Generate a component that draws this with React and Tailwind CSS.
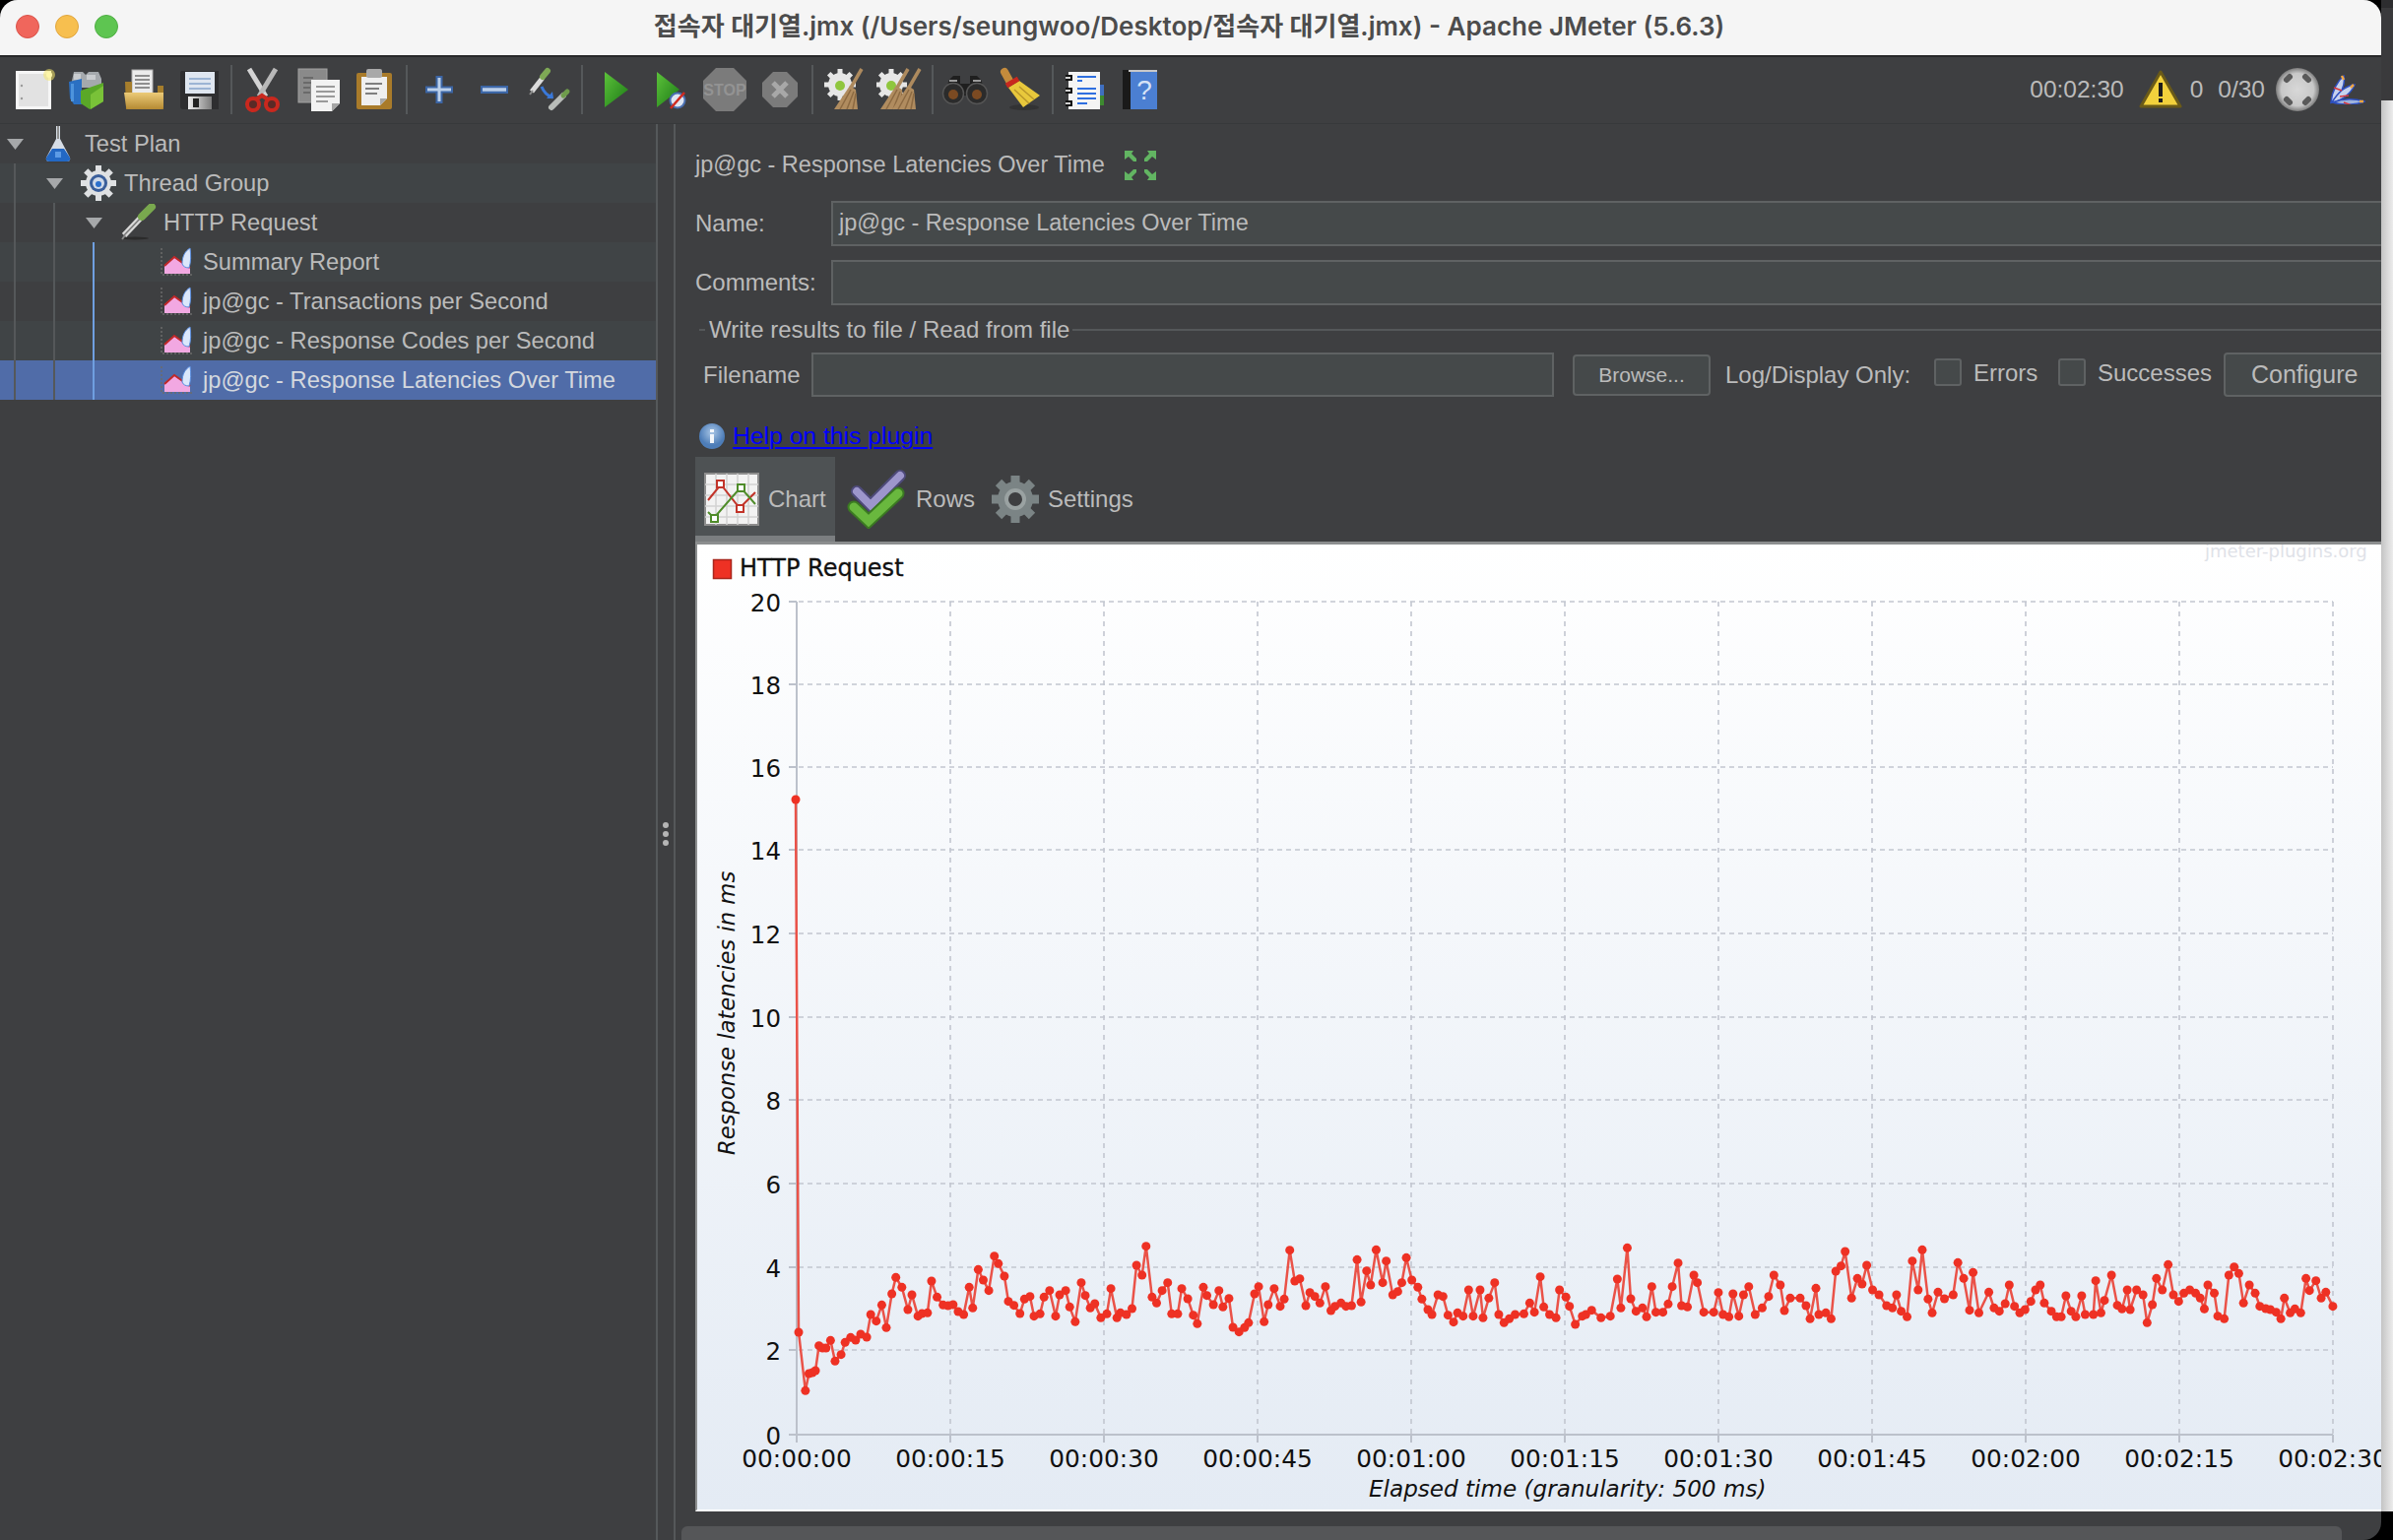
import React from 'react';

const Svg = ({ w = 48, h = 48, children, className = '' }) => (
  <svg width={w} height={h} viewBox={`0 0 ${w} ${h}`} className={`block shrink-0 ${className}`}>{children}</svg>
);

const Gear = ({ cx, cy, r, fill, teeth = 8, tw = 5, tl = 4 }) => (
  <g>
    {Array.from({ length: teeth }).map((_, i) => (
      <rect key={i} x={cx - tw / 2} y={cy - r - tl} width={tw} height={tl + 3} fill={fill} transform={`rotate(${(i * 360) / teeth} ${cx} ${cy})`} />
    ))}
    <circle cx={cx} cy={cy} r={r} fill={fill} />
  </g>
);

const NewIcon = () => (
  <Svg>
    <rect x="7.5" y="6.5" width="33" height="36" fill="#e2e2e2" stroke="#f6f6f6" strokeWidth="3" />
    <circle cx="12" cy="20" r="1.2" fill="#9a9a9a" /><circle cx="12" cy="33" r="1.2" fill="#9a9a9a" />
    <circle cx="40" cy="9" r="6" fill="#f5e76a" opacity=".55" /><circle cx="40" cy="9" r="3" fill="#fdf6a8" />
  </Svg>
);
const TemplatesIcon = () => (
  <Svg>
    <path d="M7 15 L9 6 h9 l3 3 l3-3 h10 l3 7 v9 H7z" fill="#a5a9ad" />
    <path d="M9 8 h7 v6 h-7z M22 9 h9 v5 h-9z" fill="#c9cccf" />
    <path d="M4 16 L17 13 V39 L9 39 L5 33z" fill="#2b70c2" />
    <path d="M6 18 h3 v18 h-3z" fill="#4e94dc" />
    <path d="M16 25 L39 17 V36 L25 44 L16 38z" fill="#5aa828" />
    <path d="M26 29 L39 20 V36 L26 44z" fill="#79c238" />
  </Svg>
);
const OpenIcon = () => (
  <Svg>
    <rect x="12" y="4" width="21" height="26" fill="#ececec" stroke="#b0b0b0" />
    <path d="M15 10h15M15 14h15M15 18h15M15 22h15" stroke="#8f8f8f" strokeWidth="2" />
    <path d="M5 16 H12 V30 H38 V20 H44 V44 H6z" fill="#a67e2c" />
    <defs><linearGradient id="fold" x1="0" y1="0" x2="0" y2="1"><stop offset="0" stopColor="#eccb78" /><stop offset="1" stopColor="#b58a33" /></linearGradient></defs>
    <path d="M4 27 H44 L44 41 Q44 44 41 44 H9 Q6 44 6 41z" fill="url(#fold)" />
  </Svg>
);
const SaveIcon = () => (
  <Svg>
    <path d="M5 7 Q5 5 7 5 H44 V44 H8 Q5 44 5 41z" fill="#2e2e30" />
    <rect x="10" y="6" width="30" height="22" fill="#dfe6f0" />
    <path d="M14 13h22M14 18h22M14 23h22" stroke="#9cb4d4" strokeWidth="2" />
    <defs><linearGradient id="shut" x1="0" y1="0" x2="1" y2="0"><stop offset="0" stopColor="#efefef" /><stop offset="1" stopColor="#7b7b7b" /></linearGradient></defs>
    <rect x="13" y="31" width="24" height="13" fill="url(#shut)" />
    <rect x="18" y="33" width="6" height="9" fill="#222" />
  </Svg>
);
const CutIcon = () => (
  <Svg>
    <path d="M9 3 L26 31" stroke="#d4d4d4" strokeWidth="5" />
    <path d="M36 3 L19 31" stroke="#b8b8b8" strokeWidth="5" />
    <ellipse cx="13" cy="39" rx="6" ry="6" fill="#5a2a26" stroke="#c9281e" strokeWidth="4" />
    <ellipse cx="32" cy="39" rx="6" ry="6" fill="#5a2a26" stroke="#c9281e" strokeWidth="4" />
    <path d="M16 34 L22 30 L28 34" stroke="#c9281e" strokeWidth="4" fill="none" />
  </Svg>
);
const CopyIcon = () => (
  <Svg>
    <rect x="3" y="3" width="29" height="34" fill="#8a8a8a" stroke="#a2a2a2" />
    <path d="M8 12h10M8 17h8M8 22h7M8 27h7" stroke="#6a6a6a" strokeWidth="2" />
    <path d="M16 14 H45 V38 L37 46 H16z" fill="#f2f2f2" />
    <path d="M37 46 V38 H45z" fill="#a5a5a5" />
    <path d="M21 21h19M21 26h19M21 31h19M21 36h12" stroke="#9a9a9a" strokeWidth="2" />
  </Svg>
);
const PasteIcon = () => (
  <Svg>
    <rect x="6" y="7" width="36" height="37" rx="2" fill="#a97b2a" />
    <path d="M11 11 H37 V33 L30 40 H11z" fill="#efefef" />
    <path d="M30 40 V33 H37z" fill="#a8a8a8" />
    <rect x="16" y="3" width="16" height="9" rx="2" fill="#a9a9a9" />
    <path d="M15 18h17M15 23h14M15 28h12" stroke="#7f7f7f" strokeWidth="2" />
  </Svg>
);
const PlusIcon = () => (
  <Svg>
    <path d="M24 10V38M10 24H38" stroke="#3c66a6" strokeWidth="7" />
    <path d="M24 12V36M12 24H36" stroke="#bcd0ea" strokeWidth="3" />
  </Svg>
);
const MinusIcon = () => (
  <Svg>
    <path d="M10 24H38" stroke="#3c66a6" strokeWidth="8" />
    <path d="M12 24H36" stroke="#bcd0ea" strokeWidth="3.5" />
  </Svg>
);
const ToggleIcon = () => (
  <Svg>
    <path d="M6 26 L17 12" stroke="#dcdcdc" strokeWidth="5" />
    <path d="M4 29 L7 25" stroke="#888" strokeWidth="2" />
    <path d="M17 11 L22 5" stroke="#7ea855" strokeWidth="6" strokeLinecap="round" />
    <path d="M16 21 Q19 29 27 32" stroke="#3a78d8" strokeWidth="3" fill="none" />
    <path d="M28 33 L21 33 L27 26z" fill="#3a78d8" />
    <path d="M26 42 L38 30" stroke="#b8bcb8" strokeWidth="6" strokeLinecap="round" />
    <path d="M38 30 L42 26" stroke="#6f9c4c" strokeWidth="5" strokeLinecap="round" />
  </Svg>
);
const PlayIcon = () => (
  <Svg>
    <defs><linearGradient id="pl" x1="0" y1="0" x2="1" y2="1"><stop offset="0" stopColor="#5cc23a" /><stop offset="1" stopColor="#1c7a16" /></linearGradient></defs>
    <path d="M14 6 L38 24 L14 42z" fill="url(#pl)" />
  </Svg>
);
const PlayNoIcon = () => (
  <Svg>
    <defs><linearGradient id="pl2" x1="0" y1="0" x2="1" y2="1"><stop offset="0" stopColor="#5cc23a" /><stop offset="1" stopColor="#1c7a16" /></linearGradient></defs>
    <path d="M11 6 L34 24 L11 42z" fill="url(#pl2)" />
    <circle cx="32" cy="35" r="7.5" fill="#dfe6f2" stroke="#4a6fb0" strokeWidth="2" />
    <path d="M25 43 L39 27" stroke="#d02a20" strokeWidth="2.5" />
  </Svg>
);
const StopIcon = () => (
  <Svg>
    <path d="M15 2 H33 L46 15 V33 L33 46 H15 L2 33 V15z" fill="#7b7b7b" />
    <text x="24" y="30" textAnchor="middle" fontSize="16" fontWeight="700" fill="#939393" fontFamily="'Liberation Sans',sans-serif">STOP</text>
  </Svg>
);
const ShutdownIcon = () => (
  <Svg>
    <path d="M17 6 H31 L42 17 V31 L31 42 H17 L6 31 V17z" fill="#7b7b7b" />
    <path d="M17 17 L31 31 M31 17 L17 31" stroke="#a8a8a8" strokeWidth="5" />
  </Svg>
);
const BroomHead = ({ dx = 0 }) => (
  <g transform={`translate(${dx} 0)`}>
    <path d="M30 22 L41 3" stroke="#ad8a5e" strokeWidth="3.5" />
    <path d="M13 44 L29 20 L35 24 L37 44z" fill="#b08c5f" />
    <path d="M19 44 L30 24 M26 44 L33 26 M32 44 L35 28" stroke="#8c6a42" strokeWidth="1.5" />
  </g>
);
const ClearIcon = () => (
  <Svg>
    <Gear cx={19} cy={19} r={12} fill="#e6e6e6" tw={5} tl={4} />
    <circle cx="19" cy="20" r="5" fill="#8fc63e" />
    <BroomHead />
  </Svg>
);
const ClearAllIcon = () => (
  <Svg>
    <Gear cx={15} cy={19} r={12} fill="#e6e6e6" tw={5} tl={4} />
    <circle cx="15" cy="20" r="5" fill="#8fc63e" />
    <BroomHead dx={-9} />
    <BroomHead dx={3} />
  </Svg>
);
const SearchIcon = () => (
  <Svg>
    <path d="M8 14 L12 10 H19 V18 H29 V10 H36 L40 14 L46 30 H2z" fill="#1f1f1f" />
    <circle cx="12" cy="28" r="10.5" fill="#2b2b2b" stroke="#555" strokeWidth="1.5" />
    <circle cx="36" cy="28" r="10.5" fill="#2b2b2b" stroke="#555" strokeWidth="1.5" />
    <circle cx="12" cy="29" r="5" fill="#7b4a22" />
    <circle cx="36" cy="29" r="5" fill="#7b4a22" />
    <path d="M8 15h8M32 15h8" stroke="#9a9a9a" strokeWidth="2" />
  </Svg>
);
const BroomIcon = () => (
  <Svg>
    <ellipse cx="28" cy="42" rx="15" ry="3" fill="#2b2b2b" opacity=".6" />
    <path d="M8 6 L13 15" stroke="#c48b3c" strokeWidth="8" strokeLinecap="round" />
    <path d="M12 22 L23 15 L44 30 L27 42z" fill="#e8c83c" />
    <path d="M18 24 L33 38 M23 21 L38 34" stroke="#b8962a" strokeWidth="1.5" />
    <path d="M10 20 L22 13" stroke="#c8281e" strokeWidth="5" />
  </Svg>
);
const FuncIcon = () => (
  <Svg>
    <rect x="38" y="19" width="5" height="11" fill="#3f6fc0" />
    <rect x="38" y="30" width="5" height="10" fill="#3d8a30" />
    <rect x="7" y="6" width="32" height="38" fill="#f4f4f4" />
    <path d="M4 12h7M4 25h7M4 38h7" stroke="#111" strokeWidth="6" />
    <path d="M4 12h5M4 25h5M4 38h5" stroke="#cfcfcf" strokeWidth="2" />
    <path d="M16 11h19M16 15h5M16 23h19M16 28h19M16 33h19M16 38h10" stroke="#2f6fe0" strokeWidth="2" />
  </Svg>
);
const HelpIcon = () => (
  <Svg>
    <rect x="6" y="4" width="10" height="40" fill="#1a1a1a" />
    <rect x="14" y="6" width="27" height="38" fill="#4b7fd2" />
    <rect x="12" y="4" width="29" height="2" fill="#c8c8c8" />
    <text x="28" y="34" textAnchor="middle" fontSize="28" fill="#d5e2f6" fontFamily="'Liberation Sans',sans-serif">?</text>
  </Svg>
);
const WarnIcon = () => (
  <Svg w={44} h={40}>
    <path d="M22 2 L42 37 H2z" fill="#f2d13c" stroke="#6a5a18" strokeWidth="3" strokeLinejoin="round" />
    <path d="M22 13 V27" stroke="#1c1c1c" strokeWidth="4" />
    <rect x="20" y="29" width="4" height="4" fill="#1c1c1c" />
  </Svg>
);
const BuoyIcon = () => (
  <Svg w={44} h={44}>
    <defs><radialGradient id="bu"><stop offset="0" stopColor="#d8d8d8" /><stop offset=".75" stopColor="#c8c8c8" /><stop offset="1" stopColor="#7c7c7c" /></radialGradient></defs>
    <circle cx="22" cy="22" r="22" fill="url(#bu)" />
    <g stroke="#5a5a5a" strokeWidth="6" strokeLinecap="round">
      <path d="M11 12 L14 9 M33 12 L30 9 M11 32 L14 35 M33 32 L30 35" />
    </g>
  </Svg>
);
const FeatherIcon = () => (
  <Svg w={36} h={30}>
    <path d="M1 28 C2 16 8 6 14 1 C16 10 11 22 1 28z" fill="#c6d2ee" stroke="#2e50c0" strokeWidth="1.5" />
    <path d="M2 28 C8 18 16 11 25 10 C22 18 13 26 2 28z" fill="#c6d2ee" stroke="#2e50c0" strokeWidth="1.5" />
    <path d="M3 28 C13 24 24 24 35 27 C26 31 12 31 3 28z" fill="#9fb3dc" stroke="#2e50c0" strokeWidth="1.5" />
    <path d="M12 1 l2 4 M24 10 l-3 3 M34 27 l-4 0" stroke="#f2a641" strokeWidth="2.5" />
    <path d="M4 13 l8 3 M10 22 l9 -1 M14 28 l8 3" stroke="#d8383c" strokeWidth="1.5" />
  </Svg>
);
const ExpandIcon = () => (
  <Svg w={32} h={32}>
    <g fill="#62b562">
      <path d="M0 1 H9 L7 4 L12 9 V12 H9 L4 7 L0 10z" />
      <path d="M32 1 H23 L25 4 L20 9 V12 H23 L28 7 L32 10z" />
      <path d="M0 31 H9 L7 28 L12 23 V20 H9 L4 25 L0 22z" />
      <path d="M32 31 H23 L25 28 L20 23 V20 H23 L28 25 L32 22z" />
    </g>
  </Svg>
);
const InfoIcon = () => (
  <Svg w={26} h={28}>
    <defs><radialGradient id="inf" cx=".5" cy=".35"><stop offset="0" stopColor="#a9c6e6" /><stop offset="1" stopColor="#4d7db8" /></radialGradient></defs>
    <circle cx="13" cy="14" r="13" fill="url(#inf)" />
    <rect x="11" y="12" width="4" height="9" fill="#f2f6fb" />
    <rect x="11" y="7" width="4" height="3" fill="#f2f6fb" />
  </Svg>
);
const ChartTabIcon = () => (
  <Svg w={56} h={54}>
    <rect x="1" y="1" width="54" height="52" fill="#f2f2f2" stroke="#8e8e8e" strokeWidth="2" />
    <path d="M12 1v52M23 1v52M34 1v52M45 1v52M1 12h54M1 23h54M1 34h54M1 45h54" stroke="#d2d2d2" strokeWidth="1.5" />
    <path d="M4 28 L17 12 L36 36 L52 20" stroke="#c2342a" strokeWidth="2" fill="none" />
    <path d="M4 40 L10 46 L37 15 L52 32" stroke="#4f8c2a" strokeWidth="2" fill="none" />
    <rect x="13" y="8" width="7" height="7" fill="#fff" stroke="#c2342a" strokeWidth="2" />
    <rect x="33" y="33" width="7" height="7" fill="#fff" stroke="#c2342a" strokeWidth="2" />
    <rect x="34" y="12" width="7" height="7" fill="#fff" stroke="#4f8c2a" strokeWidth="2" />
    <rect x="7" y="43" width="7" height="7" fill="#fff" stroke="#4f8c2a" strokeWidth="2" />
  </Svg>
);
const RowsTabIcon = () => (
  <Svg w={60} h={60}>
    <path d="M10 22 L24 36 L54 6" stroke="#4e4a7a" strokeWidth="12" fill="none" strokeLinecap="round" />
    <path d="M10 22 L24 36 L54 6" stroke="#9d96cc" strokeWidth="8" fill="none" strokeLinecap="round" />
    <path d="M7 38 L22 52 L52 24" stroke="#3b7a22" strokeWidth="13" fill="none" strokeLinecap="round" />
    <path d="M7 38 L22 52 L52 24" stroke="#69b83e" strokeWidth="9" fill="none" strokeLinecap="round" />
  </Svg>
);
const SettingsTabIcon = () => (
  <Svg w={48} h={50}>
    <Gear cx={24} cy={25} r={18} fill="#7b8485" teeth={8} tw={9} tl={6} />
    <circle cx="24" cy="25" r="11" fill="#9aa2a2" />
    <circle cx="24" cy="25" r="7" fill="#3e3f41" />
  </Svg>
);
const FlaskIcon = () => (
  <Svg w={36} h={38}>
    <path d="M15 1 H19 V14 L29 33 Q30 37 26 37 H8 Q4 37 5 33 L15 14z" fill="#d6dde6" />
    <path d="M17 1 V14" stroke="#8f8f8f" strokeWidth="2" />
    <path d="M11 24 H23 L29 33 Q30 37 26 37 H8 Q4 37 5 33z" fill="#2368c4" />
    <path d="M14 27 h6 v6 h-6z" fill="#5d9be6" />
  </Svg>
);
const TreeGearIcon = () => (
  <Svg w={38} h={38}>
    <Gear cx={19} cy={19} r={13} fill="#dfe1e3" teeth={8} tw={6} tl={5} />
    <circle cx="19" cy="19" r="9" fill="#3a5e9a" />
    <circle cx="19" cy="19" r="6" fill="#cfd9e8" />
    <circle cx="19" cy="20" r="3" fill="#2b6fcc" />
  </Svg>
);
const DropperIcon = () => (
  <Svg w={38} h={38}>
    <ellipse cx="16" cy="35" rx="14" ry="1.5" fill="#2b2b2b" />
    <path d="M5 32 L23 13" stroke="#d8d8d8" strokeWidth="6" />
    <path d="M5 32 L23 13" stroke="#777" strokeWidth="1.5" />
    <path d="M23 13 L33 3" stroke="#79a84e" strokeWidth="8" strokeLinecap="round" />
    <path d="M3 36 L6 32" stroke="#888" strokeWidth="2" />
  </Svg>
);
const ListenerIcon = () => (
  <Svg w={34} h={30}>
    <path d="M1 1 V28 H32" stroke="#6b6b6b" strokeWidth="1.5" strokeDasharray="2 2" fill="none" />
    <path d="M4 27 V19 L14 10 L21 15 L30 21 V27z" fill="#f2a8e2" />
    <path d="M4 19 L14 10 L21 15 L30 21" stroke="#c02828" strokeWidth="2" fill="none" />
    <path d="M22 17 C22 9 25 4 30 1 C31 8 31 15 29 21 C26 21 23 20 22 17z" fill="#dbe7fb" stroke="#5a8ee0" strokeWidth="1" />
  </Svg>
);

const rawA = [[231,577],[238,525],[245,522],[251,516],[258,440],[265,447],[272,447],[281,424],[290,487],[302,467],[310,430],[321,415],[331,423],[341,405],[353,414],[361,345],[372,365],[383,316],[392,385],[403,282],[411,232],[423,262],[435,330],[443,285],[455,350],[463,342],[474,340],[482,243],[493,292],[505,316],[515,318],[525,315],[535,336],[546,345],[557,262],[564,325],[575,208],[585,240],[596,272],[607,167],[615,190],[627,228],[635,305],[646,317],[658,342],[667,298],[678,290],[686,350],[698,343],[706,292],[717,272],[729,350],[737,285],[749,272],[757,322],[768,367],[780,248],[788,287],[798,325],[807,312],[819,355],[831,343],[839,266],[851,355],[858,340],[870,345],[881,327],[890,195],[901,225],[909,137],[921,292],[930,310],[941,272],[952,248],[960,343],[972,343],[980,266],[992,297],[1003,347],[1011,373],[1023,262],[1030,287],[1043,315],[1054,272],[1062,322],[1074,296],[1082,384],[1094,398],[1105,385],[1113,370],[1125,282],[1133,260],[1144,367],[1152,315],[1164,266],[1176,320],[1184,298],[1195,149],[1205,243],[1215,236],[1227,318],[1235,278],[1245,290],[1255,310],[1266,260],[1277,333],[1285,320],[1297,310],[1307,320],[1318,318],[1329,178],[1337,307],[1348,212],[1356,255],[1367,148],[1380,248],[1387,182],[1400,285],[1410,275],[1418,248],[1427,172],[1438,240],[1450,262],[1458,298],[1470,330],[1478,345],[1490,285],[1500,290],[1510,347],[1521,368],[1529,340],[1540,350],[1551,270],[1560,350]];
const rawB = [[5,270],[10,355],[20,295],[30,248],[37,345],[46,370],[55,358],[65,345],[80,343],[90,310],[98,338],[108,230],[114,322],[124,345],[135,355],[141,270],[152,292],[158,320],[168,375],[180,350],[186,345],[196,332],[212,355],[228,350],[240,237],[246,325],[257,142],[263,297],[272,335],[283,325],[290,352],[299,260],[306,338],[318,338],[327,313],[334,260],[344,188],[350,318],[360,322],[371,225],[377,248],[388,338],[405,338],[413,278],[421,345],[431,352],[438,282],[448,350],[456,285],[465,260],[476,345],[488,325],[499,290],[508,225],[519,255],[526,333],[536,295],[553,295],[563,318],[570,358],[580,265],[585,345],[597,340],[606,358],[614,213],[623,197],[630,153],[641,295],[651,235],[659,252],[667,195],[677,270],[688,285],[701,318],[711,325],[718,285],[726,335],[736,352],[745,182],[755,270],[762,148],[772,298],[779,340],[789,277],[800,297],[815,285],[823,187],[833,235],[843,332],[849,217],[859,340],[876,277],[885,325],[894,335],[904,312],[911,255],[920,320],[929,340],[938,330],[948,305],[956,270],[964,255],[971,310],[983,335],[992,352],[1000,352],[1008,288],[1017,335],[1025,352],[1035,288],[1041,345],[1055,345],[1059,242],[1068,340],[1074,302],[1086,225],[1096,317],[1104,328],[1113,270],[1118,330],[1129,270],[1140,285],[1147,370],[1156,315],[1163,235],[1173,270],[1183,193],[1192,285],[1201,305],[1210,280],[1220,270],[1230,280],[1238,295],[1245,328],[1251,255],[1262,280],[1268,350],[1279,358],[1287,225],[1296,200],[1304,220],[1312,310],[1322,255],[1332,280],[1340,320],[1350,327],[1358,330],[1368,338],[1376,358],[1382,295],[1392,340],[1400,328],[1410,340],[1419,235],[1425,272],[1436,242],[1445,295],[1453,277],[1465,320]];
const pts = [
  [808, 812],
  [811, 1353],
  ...rawA.map(([x, y]) => [700 + x / 1.96, 1220 + y / 3]),
  ...rawB.map(([x, y]) => [1500 + x / 1.686, 1220 + y / 3]),
];

const yVals = [[20, 611], [18, 695], [16, 779], [14, 863], [12, 948], [10, 1033], [8, 1117], [6, 1202], [4, 1287], [2, 1371], [0, 1457]];
const xLabels = ['00:00:00', '00:00:15', '00:00:30', '00:00:45', '00:01:00', '00:01:15', '00:01:30', '00:01:45', '00:02:00', '00:02:15', '00:02:30'];
const dv = "'DejaVu Sans',sans-serif";

function Chart() {
  return (
    <svg width="1710" height="980" viewBox="708 553 1710 980" className="block">
      <text x="2239" y="566" fontSize="18" fill="#dfe2e8" fontFamily={dv}>jmeter-plugins.org</text>
      <rect x="724.5" y="568.5" width="18" height="19" fill="#ee3124" stroke="#a9261c" strokeWidth="1.5" />
      <text x="751" y="585" fontSize="24" fill="#111" fontFamily={dv} stroke="#111" strokeWidth=".3">HTTP Request</text>
      {yVals.map(([v, y]) => (
        <g key={v}>
          <text x="793" y={y + 10} textAnchor="end" fontSize="24.5" fill="#111" fontFamily={dv}>{v}</text>
          <path d={`M801 ${y}H809`} stroke="#bcc1cb" strokeWidth="2" />
          {v !== 0 && <path d={`M811 ${y}H2369`} stroke="#c2c6d0" strokeWidth="1.6" strokeDasharray="5 4" />}
        </g>
      ))}
      {xLabels.map((l, i) => {
        const x = 809 + 156 * i;
        return (
          <g key={l}>
            {i > 0 && <path d={`M${x} 611V1457`} stroke="#c2c6d0" strokeWidth="1.6" strokeDasharray="5 5" />}
            <path d={`M${x} 1457V1465`} stroke="#bcc1cb" strokeWidth="2" />
            <text x={x} y="1490" textAnchor="middle" fontSize="24.8" fill="#111" fontFamily={dv}>{l}</text>
          </g>
        );
      })}
      <path d="M809 611V1457H2369" stroke="#bcc1cb" strokeWidth="2" fill="none" />
      <text transform="translate(746 1173) rotate(-90)" fontSize="22.7" fontStyle="italic" fill="#111" fontFamily={dv}>Response latencies in ms</text>
      <text x="1390" y="1520" fontSize="23.1" fontStyle="italic" fill="#111" fontFamily={dv}>Elapsed time (granularity: 500 ms)</text>
      <polyline points={pts.map((p) => p.join(',')).join(' ')} fill="none" stroke="#ea5248" strokeWidth="2.5" />
      {pts.map((p, i) => (
        <circle key={i} cx={p[0]} cy={p[1]} r="4.5" fill="#ee3124" />
      ))}
    </svg>
  );
}

const Tri = () => (
  <svg width="20" height="14" viewBox="0 0 20 14" className="block shrink-0"><path d="M1 2 H18 L9.5 13z" fill="#a6a8aa" /></svg>
);

const rows = [
  { pl: 'pl-[6px]', icon: <FlaskIcon />, t: 'Test Plan', arrow: true },
  { pl: 'pl-[46px]', icon: <TreeGearIcon />, t: 'Thread Group', arrow: true, alt: true },
  { pl: 'pl-[86px]', icon: <DropperIcon />, t: 'HTTP Request', arrow: true },
  { pl: 'pl-[126px]', icon: <ListenerIcon />, t: 'Summary Report', alt: true },
  { pl: 'pl-[126px]', icon: <ListenerIcon />, t: 'jp@gc - Transactions per Second' },
  { pl: 'pl-[126px]', icon: <ListenerIcon />, t: 'jp@gc - Response Codes per Second', alt: true },
  { pl: 'pl-[126px]', icon: <ListenerIcon />, t: 'jp@gc - Response Latencies Over Time', sel: true },
];

function Tree() {
  return (
    <div className="relative w-[666px] shrink-0 text-[23.7px]">
      {rows.map((r) => (
        <div key={r.t} className={`flex h-10 items-center ${r.pl} ${r.sel ? 'bg-[#506ca8] text-[#d4d8de]' : r.alt ? 'bg-[#404446]' : ''}`}>
          <span className="flex w-5 shrink-0 items-center justify-center">{r.arrow ? <Tri /> : null}</span>
          <span className="ml-[15px] flex w-[38px] shrink-0 items-center justify-center">{r.icon}</span>
          <span className="ml-[7px] mt-[2px]">{r.t}</span>
        </div>
      ))}
      <span className="absolute left-[14px] top-10 h-[240px] w-[2px] bg-[#55585a]" />
      <span className="absolute left-[54px] top-20 h-[200px] w-[2px] bg-[#55585a]" />
      <span className="absolute left-[94px] top-[120px] h-[160px] w-[2px] bg-[#6f9fe0]" />
    </div>
  );
}

const Sep = () => (
  <div className="flex h-[50px] w-[10px] shrink-0 justify-center"><div className="h-full w-[2px] bg-[#55585a]" /></div>
);
const Tool = ({ children }) => <div className="flex w-14 shrink-0 justify-center">{children}</div>;

function Toolbar() {
  return (
    <div className="flex h-[70px] shrink-0 items-center border-t-2 border-b border-t-[#28282a] border-b-[#37393b] pb-[2px] pl-[6px] pr-[16px]">
      <Tool><NewIcon /></Tool><Tool><TemplatesIcon /></Tool><Tool><OpenIcon /></Tool><Tool><SaveIcon /></Tool>
      <Sep />
      <Tool><CutIcon /></Tool><Tool><CopyIcon /></Tool><Tool><PasteIcon /></Tool>
      <Sep />
      <Tool><PlusIcon /></Tool><Tool><MinusIcon /></Tool><Tool><ToggleIcon /></Tool>
      <Sep />
      <Tool><PlayIcon /></Tool><Tool><PlayNoIcon /></Tool><Tool><StopIcon /></Tool><Tool><ShutdownIcon /></Tool>
      <Sep />
      <Tool><ClearIcon /></Tool><Tool><ClearAllIcon /></Tool>
      <Sep />
      <Tool><SearchIcon /></Tool><Tool><BroomIcon /></Tool>
      <Sep />
      <Tool><FuncIcon /></Tool><Tool><HelpIcon /></Tool>
      <div className="ml-auto flex items-center text-[24.5px]">
        <span className="mt-[2px]">00:02:30</span>
        <span className="ml-[15px]"><WarnIcon /></span>
        <span className="ml-[8px] mt-[2px]">0</span>
        <span className="ml-[15px] mt-[2px]">0/30</span>
        <span className="ml-[11px]"><BuoyIcon /></span>
        <span className="ml-[11px]"><FeatherIcon /></span>
      </div>
    </div>
  );
}

function Main() {
  return (
    <div className="flex min-w-0 flex-1 flex-col overflow-hidden border-l-2 border-l-[#55585a] pl-5">
      <div className="mt-[26px] flex h-8 items-center text-[23.5px]">
        <span>jp@gc - Response Latencies Over Time</span>
        <span className="ml-[20px]"><ExpandIcon /></span>
      </div>
      <div className="mt-5 flex h-[46px] items-center">
        <span className="w-[138px] shrink-0">Name:</span>
        <div className="flex h-full w-[1700px] shrink-0 items-center border-2 border-[#5f6263] bg-[#45494a] pl-[6px] text-[23.5px]">jp@gc - Response Latencies Over Time</div>
      </div>
      <div className="mt-[14px] flex h-[46px] items-center">
        <span className="w-[138px] shrink-0">Comments:</span>
        <div className="h-full w-[1700px] shrink-0 border-2 border-[#5f6263] bg-[#45494a]" />
      </div>
      <div className="mt-[8px] flex h-[34px] items-center pl-[4px]">
        <div className="h-[2px] w-[6px] shrink-0 bg-[#55585a]" />
        <span className="ml-[4px] whitespace-nowrap">Write results to file / Read from file</span>
        <div className="ml-[3px] h-[2px] flex-1 bg-[#55585a]" />
      </div>
      <div className="mt-[6px] flex h-[45px] items-center pl-2">
        <span className="w-[110px] shrink-0">Filename</span>
        <div className="h-full w-[754px] shrink-0 border-2 border-[#5f6263] bg-[#45494a]" />
        <div className="ml-[19px] flex h-[42px] w-[140px] shrink-0 items-center justify-center rounded-[4px] border-2 border-[#5f6263] bg-[#45494a] text-[21px]">Browse...</div>
        <span className="ml-[15px] w-[190px] shrink-0 whitespace-nowrap">Log/Display Only:</span>
        <div className="ml-[22px] -mt-[6px] h-7 w-7 shrink-0 rounded-[3px] border-2 border-[#5f6263] bg-[#45494a]" />
        <span className="ml-[12px] -mt-[4px] w-[64px] shrink-0">Errors</span>
        <div className="ml-[22px] -mt-[6px] h-7 w-7 shrink-0 rounded-[3px] border-2 border-[#5f6263] bg-[#45494a]" />
        <span className="ml-[12px] -mt-[4px] w-[114px] shrink-0">Successes</span>
        <div className="ml-[14px] flex h-[45px] w-[180px] shrink-0 items-center rounded-[4px] border-2 border-[#5f6263] bg-[#45494a] pl-[26px] text-[25px]">Configure</div>
      </div>
      <div className="mt-[26px] flex h-7 items-center pl-[4px]">
        <InfoIcon />
        <a className="ml-[8px] text-[24.7px] text-[#0000ff] underline decoration-2 underline-offset-[3px]">Help on this plugin</a>
      </div>
      <div className="mt-[7px] flex h-[86px] shrink-0 items-start">
        <div className="flex h-[86px] w-[142px] flex-col bg-[#4e5254]">
          <div className="flex h-20 items-center pl-[9px] pt-[6px]">
            <ChartTabIcon />
            <span className="ml-[9px]">Chart</span>
          </div>
          <div className="h-[6px] bg-[#7b7e80]" />
        </div>
        <div className="flex h-20 items-center pl-[12px] pt-[6px]">
          <RowsTabIcon />
          <span className="ml-[10px]">Rows</span>
        </div>
        <div className="flex h-20 items-center pl-[17px] pt-[6px]">
          <SettingsTabIcon />
          <span className="ml-[9px]">Settings</span>
        </div>
      </div>
      <div className="h-[985px] shrink-0 overflow-hidden border-t-[3px] border-l-2 border-b-[2px] border-t-[#8c8e8f] border-l-[#8c8e8f] border-b-white bg-linear-to-b from-white to-[#e4ebf4]">
        <Chart />
      </div>
      <div className="mt-[15px] ml-[-14px] h-[14px] w-[1686px] shrink-0 rounded-t-[6px] bg-[#555658]" />
    </div>
  );
}

export default function App() {
  return (
    <div className="flex h-[1564px] w-[2430px] overflow-hidden bg-black font-['Liberation_Sans',sans-serif] text-[24px] text-[#bbbbbb]">
      <div className="flex h-full w-[2418px] shrink-0 flex-col overflow-hidden rounded-t-[18px] rounded-br-[18px] bg-[#3e3f41]">
        <div className="relative flex h-14 shrink-0 items-center justify-center bg-[#f5f5f5] pb-[3px] pr-[3px] font-['Inter','Noto_Sans_CJK_KR',sans-serif] text-[26px] font-semibold text-[#4c4c4c]">
          <div className="absolute left-4 top-[15px] flex gap-[16px]">
            <span className="h-6 w-6 rounded-full border border-[#d9534a] bg-[#f0665c]" />
            <span className="h-6 w-6 rounded-full border border-[#dfa53e] bg-[#f7bf4f]" />
            <span className="h-6 w-6 rounded-full border border-[#4fae45] bg-[#5ec551]" />
          </div>
          <span>접속자 대기열.jmx (/Users/seungwoo/Desktop/접속자 대기열.jmx) - Apache JMeter (5.6.3)</span>
        </div>
        <Toolbar />
        <div className="flex min-h-0 flex-1">
          <Tree />
          <div className="flex w-[18px] shrink-0 flex-col items-center justify-center gap-[3px] border-l-2 border-l-[#55585a] pt-[4px]">
            <span className="h-[6px] w-[6px] rounded-full bg-[#b5b5b5]" />
            <span className="h-[6px] w-[6px] rounded-full bg-[#b5b5b5]" />
            <span className="h-[6px] w-[6px] rounded-full bg-[#b5b5b5]" />
          </div>
          <Main />
        </div>
      </div>
      <div className="flex h-full w-3 shrink-0 flex-col">
        <div className="h-2 bg-[#2d2d2f]" />
        <div className="h-[94px] bg-[#3a3a3c]" />
        <div className="h-[1433px] bg-linear-to-r from-[#c4c4c4] to-[#ececec]" />
      </div>
    </div>
  );
}
